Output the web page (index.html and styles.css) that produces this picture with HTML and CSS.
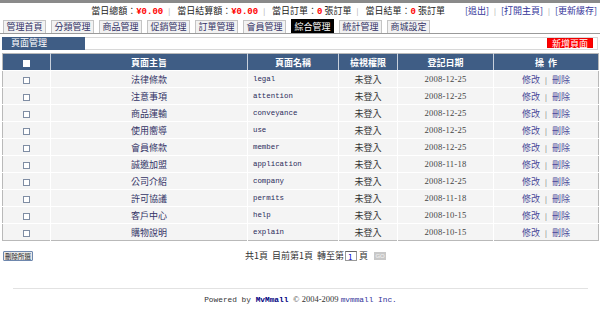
FILE: index.html
```html
<!DOCTYPE html>
<html>
<head>
<meta charset="utf-8">
<link rel="stylesheet" href="styles.css">
</head>
<body>
<div class="topbar"></div>
<div class="info">
  <span>當日總額：<b class="red">¥0.00</b></span><span class="sep">|</span>
  <span>當日結算額：<b class="red">¥0.00</b></span><span class="sep">|</span>
  <span>當日訂單：<b class="redn">0</b> 張訂單</span><span class="sep">|</span>
  <span>當日結單：<b class="redn">0</b> 張訂單</span>
  <a class="lnk first">[退出]</a><span class="sep">|</span><a class="lnk">[打開主頁]</a><span class="sep">|</span><a class="lnk">[更新緩存]</a>
</div>
<div class="tabs">
  <span class="tab">管理首頁</span>
  <span class="tab">分類管理</span>
  <span class="tab">商品管理</span>
  <span class="tab">促銷管理</span>
  <span class="tab">訂單管理</span>
  <span class="tab">會員管理</span>
  <span class="tab active">綜合管理</span>
  <span class="tab">統計管理</span>
  <span class="tab">商城設定</span>
</div>
<div class="section">
  <div class="stitle">頁面管理</div>
  <div class="sbar"><span class="addbtn">新增頁面</span></div>
</div>
<table class="grid">
  <colgroup>
    <col class="c1"><col class="c2"><col class="c3"><col class="c4"><col class="c5"><col class="c6">
  </colgroup>
  <thead>
    <tr><th><span class="cb cbh"></span></th><th>頁面主旨</th><th>頁面名稱</th><th>檢視權限</th><th>登記日期</th><th>操&nbsp;&nbsp;作</th></tr>
  </thead>
  <tbody>
    <tr><td class="ck"><span class="cb"></span></td><td class="tt">法律條款</td><td class="nm">legal</td><td class="pm">未登入</td><td class="dt">2008-12-25</td><td class="op"><a>修改</a><span class="sep">|</span><a>刪除</a></td></tr>
    <tr><td class="ck"><span class="cb"></span></td><td class="tt">注意事項</td><td class="nm">attention</td><td class="pm">未登入</td><td class="dt">2008-12-25</td><td class="op"><a>修改</a><span class="sep">|</span><a>刪除</a></td></tr>
    <tr><td class="ck"><span class="cb"></span></td><td class="tt">商品運輸</td><td class="nm">conveyance</td><td class="pm">未登入</td><td class="dt">2008-12-25</td><td class="op"><a>修改</a><span class="sep">|</span><a>刪除</a></td></tr>
    <tr><td class="ck"><span class="cb"></span></td><td class="tt">使用嚮導</td><td class="nm">use</td><td class="pm">未登入</td><td class="dt">2008-12-25</td><td class="op"><a>修改</a><span class="sep">|</span><a>刪除</a></td></tr>
    <tr><td class="ck"><span class="cb"></span></td><td class="tt">會員條款</td><td class="nm">member</td><td class="pm">未登入</td><td class="dt">2008-12-25</td><td class="op"><a>修改</a><span class="sep">|</span><a>刪除</a></td></tr>
    <tr><td class="ck"><span class="cb"></span></td><td class="tt">誠邀加盟</td><td class="nm">application</td><td class="pm">未登入</td><td class="dt">2008-11-18</td><td class="op"><a>修改</a><span class="sep">|</span><a>刪除</a></td></tr>
    <tr><td class="ck"><span class="cb"></span></td><td class="tt">公司介紹</td><td class="nm">company</td><td class="pm">未登入</td><td class="dt">2008-12-25</td><td class="op"><a>修改</a><span class="sep">|</span><a>刪除</a></td></tr>
    <tr><td class="ck"><span class="cb"></span></td><td class="tt">許可協議</td><td class="nm">permits</td><td class="pm">未登入</td><td class="dt">2008-11-18</td><td class="op"><a>修改</a><span class="sep">|</span><a>刪除</a></td></tr>
    <tr><td class="ck"><span class="cb"></span></td><td class="tt">客戶中心</td><td class="nm">help</td><td class="pm">未登入</td><td class="dt">2008-10-15</td><td class="op"><a>修改</a><span class="sep">|</span><a>刪除</a></td></tr>
    <tr><td class="ck"><span class="cb"></span></td><td class="tt">購物說明</td><td class="nm">explain</td><td class="pm">未登入</td><td class="dt">2008-10-15</td><td class="op"><a>修改</a><span class="sep">|</span><a>刪除</a></td></tr>
  </tbody>
</table>
<div class="actions">
  <span class="delbtn">刪除所選</span>
  <div class="pager">共1頁&nbsp; 目前第1頁&nbsp; 轉至第<span class="pbox">1</span>頁&nbsp; <span class="go">GO</span></div>
</div>
<div class="footer">
  <span class="pw">Powered by <b class="brand">MvMmall</b> </span><span class="copy">© 2004-2009 </span><span class="inc">mvmmall Inc.</span>
</div>
</body>
</html>
```

FILE: styles.css
```css
* { box-sizing: border-box; }
body {
  margin: 0;
  width: 600px;
  height: 312px;
  background: #fff;
  font-family: "Noto Sans CJK TC", "Liberation Sans", sans-serif;
  font-size: 9px;
  color: #333;
  overflow: hidden;
}
.topbar { height: 3px; background: #8a8a8a; }
.info {
  height: 16px;
  line-height: 16px;
  text-align: right;
  padding-right: 3px;
  white-space: nowrap;
  color: #222;
}
.info .sep { color: #999; margin: 0 5px; font-size: 7px; }
.red, .redn { color: #ff0000; font-family: "Liberation Mono", monospace; font-weight: bold; font-size: 9px; }
.lnk { color: #333399; }
.lnk.first { margin-left: 18px; }
.tabs {
  display: flex;
  gap: 5px;
  padding-left: 3px;
  height: 14px;
  margin-top: 1px;
  border-bottom: 1px solid #9a9a9a;
  align-items: flex-end;
}
.tab {
  width: 43px;
  height: 13px;
  line-height: 12px;
  text-align: center;
  background: #f2f2f2;
  border: 1px solid #c4c4c4;
  border-bottom: none;
  color: #333366;
}
.tab.active { background: #000; color: #fff; border-color: #000; height: 14px; line-height: 13px; }
.section {
  display: flex;
  margin: 3px 2px 0 2px;
  height: 13px;
  border: 1px solid #d8d8d8;
  border-left: none;
}
.stitle {
  width: 83px;
  background: #3f5d85;
  color: #fff;
  line-height: 12px;
  padding-left: 9px;
  margin-top: -1px;
  height: 13px;
}
.sbar { flex: 1; display: flex; justify-content: flex-end; padding-right: 4px; }
.addbtn {
  background: #ff0000;
  color: #fff;
  width: 46px;
  height: 10px;
  line-height: 10px;
  text-align: center;
  border: 1px solid #e00;
}
.grid {
  margin: 3px 0 0 2px;
  width: 596px;
  border-collapse: collapse;
  table-layout: fixed;
  border: 1px solid #b9b9b9;
}
.c1 { width: 48px; } .c2 { width: 197px; } .c3 { width: 91px; }
.c4 { width: 59px; } .c5 { width: 96px; } .c6 { width: 105px; }
.grid th {
  background: #3f5d85;
  color: #fff;
  font-weight: bold;
  height: 17px;
  padding: 0;
  border-left: 1px solid #c8d0dc;
  border-bottom: 1px solid #fff;
  text-align: center;
}
.grid th:first-child { border-left: none; }
.grid td {
  background: #f4f4f4;
  height: 17px;
  padding: 0;
  border-left: 1px solid #fff;
  border-top: 1px solid #fff;
  text-align: center;
  white-space: nowrap;
}
.grid td:first-child { border-left: none; }
.cb {
  display: inline-block;
  width: 7px;
  height: 7px;
  background: #fff;
  border: 1px solid #7f8da3;
  vertical-align: middle;
}
.cbh { border-color: #fff; }
.tt { color: #333366; }
.grid td.nm {
  text-align: left;
  padding-left: 5px;
  font-family: "Liberation Mono", monospace;
  font-size: 7.4px;
  color: #2a2a5a;
}
.pm { color: #333; }
.dt { font-family: "Liberation Serif", serif; font-size: 8.6px; color: #444; letter-spacing: 0.2px; }
.op a { color: #4a4a99; }
.op .sep { color: #666; margin: 0 5px; font-size: 7px; }
.actions {
  display: flex;
  align-items: center;
  margin-top: 9px;
  padding-left: 3px;
  height: 11px;
}
.delbtn {
  width: 30px;
  height: 10px;
  line-height: 8px;
  font-size: 6.5px;
  white-space: nowrap;
  overflow: hidden;
  text-align: center;
  border: 1px solid #6e87ad;
  background: #e8e8e8;
  color: #222;
  border-radius: 1px;
}
.pager {
  margin-left: 212px;
  color: #333;
  display: flex;
  align-items: center;
  white-space: nowrap;
}
.pbox {
  display: inline-block;
  width: 12px;
  height: 10px;
  line-height: 9px;
  border: 1px solid #999;
  border-top-color: #666;
  font-size: 8px;
  padding-left: 2px;
  color: #00c;
  margin: 0 2px 0 1px;
  background: #fff;
}
.go {
  display: inline-block;
  width: 12px;
  height: 8px;
  line-height: 8px;
  background: #c8c8c8;
  color: #f4f4f4;
  font-size: 6px;
  font-family: "Liberation Sans", sans-serif;
  text-align: center;
  margin-left: 4px;
  overflow: hidden;
}
.footer {
  margin: 27px 12px 0 13px;
  border-top: 1px solid #e2e2e2;
  padding-top: 4px;
  text-align: center;
  white-space: nowrap;
  font-size: 8px;
}
.pw { font-family: "Liberation Mono", monospace; color: #333; font-size: 7.8px; }
.brand { color: #000080; font-family: "Liberation Mono", monospace; }
.copy { font-family: "Liberation Serif", serif; color: #333; font-size: 8.5px; }
.inc { font-family: "Liberation Mono", monospace; color: #333399; font-size: 7.8px; }
```
